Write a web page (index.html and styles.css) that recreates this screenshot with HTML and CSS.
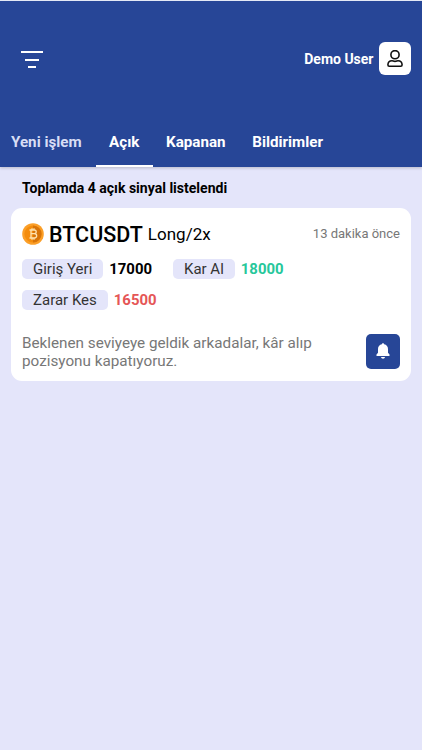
FILE: index.html
```html
<!DOCTYPE html>
<html lang="tr">
<head>
    <meta charset="UTF-8">
    <meta name="viewport" content="width=device-width, initial-scale=1.0">
    <title>Sinyaller</title>
    <link rel="stylesheet" href="styles.css">
</head>
<body>
    <header class="header">
        <div class="top-bar">
            <button class="menu-button" aria-label="Menü">
                <span class="menu-line"></span>
                <span class="menu-line menu-line-mid"></span>
                <span class="menu-line menu-line-short"></span>
            </button>
            <div class="user">
                <span class="user-name">Demo User</span>
                <div class="avatar">
                    <svg width="16" height="18" viewBox="0 0 16 18" fill="none" stroke="#111" stroke-width="1.6" stroke-linejoin="round">
                        <circle cx="8" cy="4.7" r="4.1"/>
                        <path d="M5 10.8C2.6 10.8 1 12.6.9 14.8c0 .9.5 1.5 1.3 1.5h11.6c.8 0 1.3-.6 1.3-1.5-.1-2.2-1.7-4-4.1-4-1 0-1.5.6-3 .6s-2-.6-3-.6z"/>
                    </svg>
                </div>
            </div>
        </div>
        <nav class="tabs">
            <div class="tab tab-muted">Yeni işlem</div>
            <div class="tab tab-active">Açık</div>
            <div class="tab">Kapanan</div>
            <div class="tab">Bildirimler</div>
        </nav>
    </header>

    <main class="content">
        <p class="summary">Toplamda 4 açık sinyal listelendi</p>

        <div class="card">
            <div class="card-header">
                <svg class="coin" width="22" height="22" viewBox="0 0 22 22">
                    <circle cx="11" cy="11" r="10.8" fill="#fb9f28"/>
                    <circle cx="11" cy="11" r="8.6" fill="#f48c0c"/>
                    <path d="M11 2.4a8.6 8.6 0 0 1 0 17.2z" fill="#d87408"/>
                    <path d="M7.5 7h4.7c2.7 0 2.7 3.7 0 3.7H9M12.2 10.7c3.3 0 3.3 4.3 0 4.3H7.5M9 7v8M10 5.3V7M12 5.3V7M10 15v1.7M12 15v1.7" fill="none" stroke="#ffe3b0" stroke-width="1.3"/>
                </svg>
                <span class="symbol">BTCUSDT</span>
                <span class="position">Long/2x</span>
                <span class="time">13 dakika önce</span>
            </div>

            <div class="levels">
                <div class="level">
                    <span class="label">Giriş Yeri</span>
                    <span class="value">17000</span>
                </div>
                <div class="level">
                    <span class="label">Kar Al</span>
                    <span class="value value-profit">18000</span>
                </div>
                <div class="level">
                    <span class="label">Zarar Kes</span>
                    <span class="value value-loss">16500</span>
                </div>
            </div>

            <div class="card-footer">
                <p class="note">Beklenen seviyeye geldik arkadalar, kâr alıp pozisyonu kapatıyoruz.</p>
                <button class="notify-button" aria-label="Bildirim">
                    <svg width="14" height="16" viewBox="0 0 14 16" fill="#fff">
                        <path d="M7 .2c-.7 0-1.1.4-1.1 1.1C3.4 1.8 2 3.6 2 6v3.8L.5 11.6v1.4h13v-1.4L12 9.8V6c0-2.4-1.4-4.2-3.900-4.700C8.100.6 7.700.2 7 .2z"/>
                        <path d="M5 14h4c-.2 1-1 1.700-2 1.700S5.200 15 5 14z"/>
                    </svg>
                </button>
            </div>
        </div>
    </main>
</body>
</html>
```
FILE: styles.css
```css
* {
    box-sizing: border-box;
}
body {
    font-family: Roboto, sans-serif;
    background-color: #e4e5fa;
    color: #000;
    margin: 0;
    min-height: 100vh;
}
button {
    border: none;
    cursor: pointer;
    padding: 0;
}
.header {
    height: 167px;
    background: #274697;
    border-top: 1px solid #e4e9f5;
    box-shadow: 0 1px 3px rgba(0,0,0,0.2);
    display: flex;
    flex-direction: column;
    justify-content: space-between;
}
.top-bar {
    display: flex;
    justify-content: space-between;
    align-items: center;
    padding: 41px 11px 0 20px;
}
.menu-button {
    background: none;
    width: 24px;
    display: flex;
    flex-direction: column;
    align-items: center;
    gap: 5.5px;
    margin-top: 2px;
}
.menu-line {
    width: 22px;
    height: 2px;
    background: #fff;
}
.menu-line-mid {
    width: 14px;
}
.menu-line-short {
    width: 8px;
}
.user {
    display: flex;
    align-items: center;
    gap: 5.5px;
}
.user-name {
    color: #fff;
    font-size: 14px;
    font-weight: 700;
}
.avatar {
    width: 32px;
    height: 33px;
    background: #fff;
    border-radius: 6px;
    display: flex;
    align-items: center;
    justify-content: center;
}
.tabs {
    display: flex;
}
.tab {
    padding: 0 13.3px;
    height: 34px;
    line-height: 19px;
    color: #fff;
    font-size: 15.2px;
    font-weight: 700;
    border-bottom: 2px solid transparent;
}
.tab:first-child {
    padding-left: 11px;
    margin-right: 0.8px;
}
.tab-muted {
    color: #d8def5;
}
.tab-active {
    border-bottom-color: #fff;
}
.content {
    padding: 13px 11px 0;
}
.summary {
    margin: 0 0 11px 11px;
    font-size: 14.05px;
    line-height: 17px;
    font-weight: 700;
}
.card {
    background: #fff;
    border-radius: 11px;
    height: 173px;
    padding: 13px 11px 12px;
    display: flex;
    flex-direction: column;
}
.card-header {
    display: flex;
    align-items: center;
    height: 26px;
}
.symbol {
    font-size: 21.5px;
    font-weight: 500;
    margin-left: 5px;
}
.position {
    font-size: 17px;
    margin-left: 5px;
}
.time {
    margin-left: auto;
    font-size: 13px;
    line-height: 14px;
    color: #777;
}
.levels {
    display: flex;
    flex-wrap: wrap;
    gap: 11px 21px;
    margin-top: 12px;
}
.level {
    display: flex;
    align-items: center;
    gap: 6px;
}
.label {
    background: #e4e5fa;
    color: #333;
    height: 20px;
    line-height: 21px;
    padding: 0 11px;
    border-radius: 5px;
    font-size: 15px;
}
.value {
    font-size: 14.9px;
    line-height: 20px;
    font-weight: 700;
}
.value-profit {
    color: #27c79b;
}
.value-loss {
    color: #e55656;
}
.card-footer {
    margin-top: auto;
    margin-bottom: -1px;
    display: flex;
    justify-content: space-between;
    align-items: center;
}
.note {
    margin: 2px 0 0;
    width: 300px;
    font-size: 15.25px;
    line-height: 18px;
    color: #777;
}
.notify-button {
    width: 34px;
    height: 35px;
    background: #274697;
    border-radius: 5px;
    display: flex;
    align-items: center;
    justify-content: center;
}
```
